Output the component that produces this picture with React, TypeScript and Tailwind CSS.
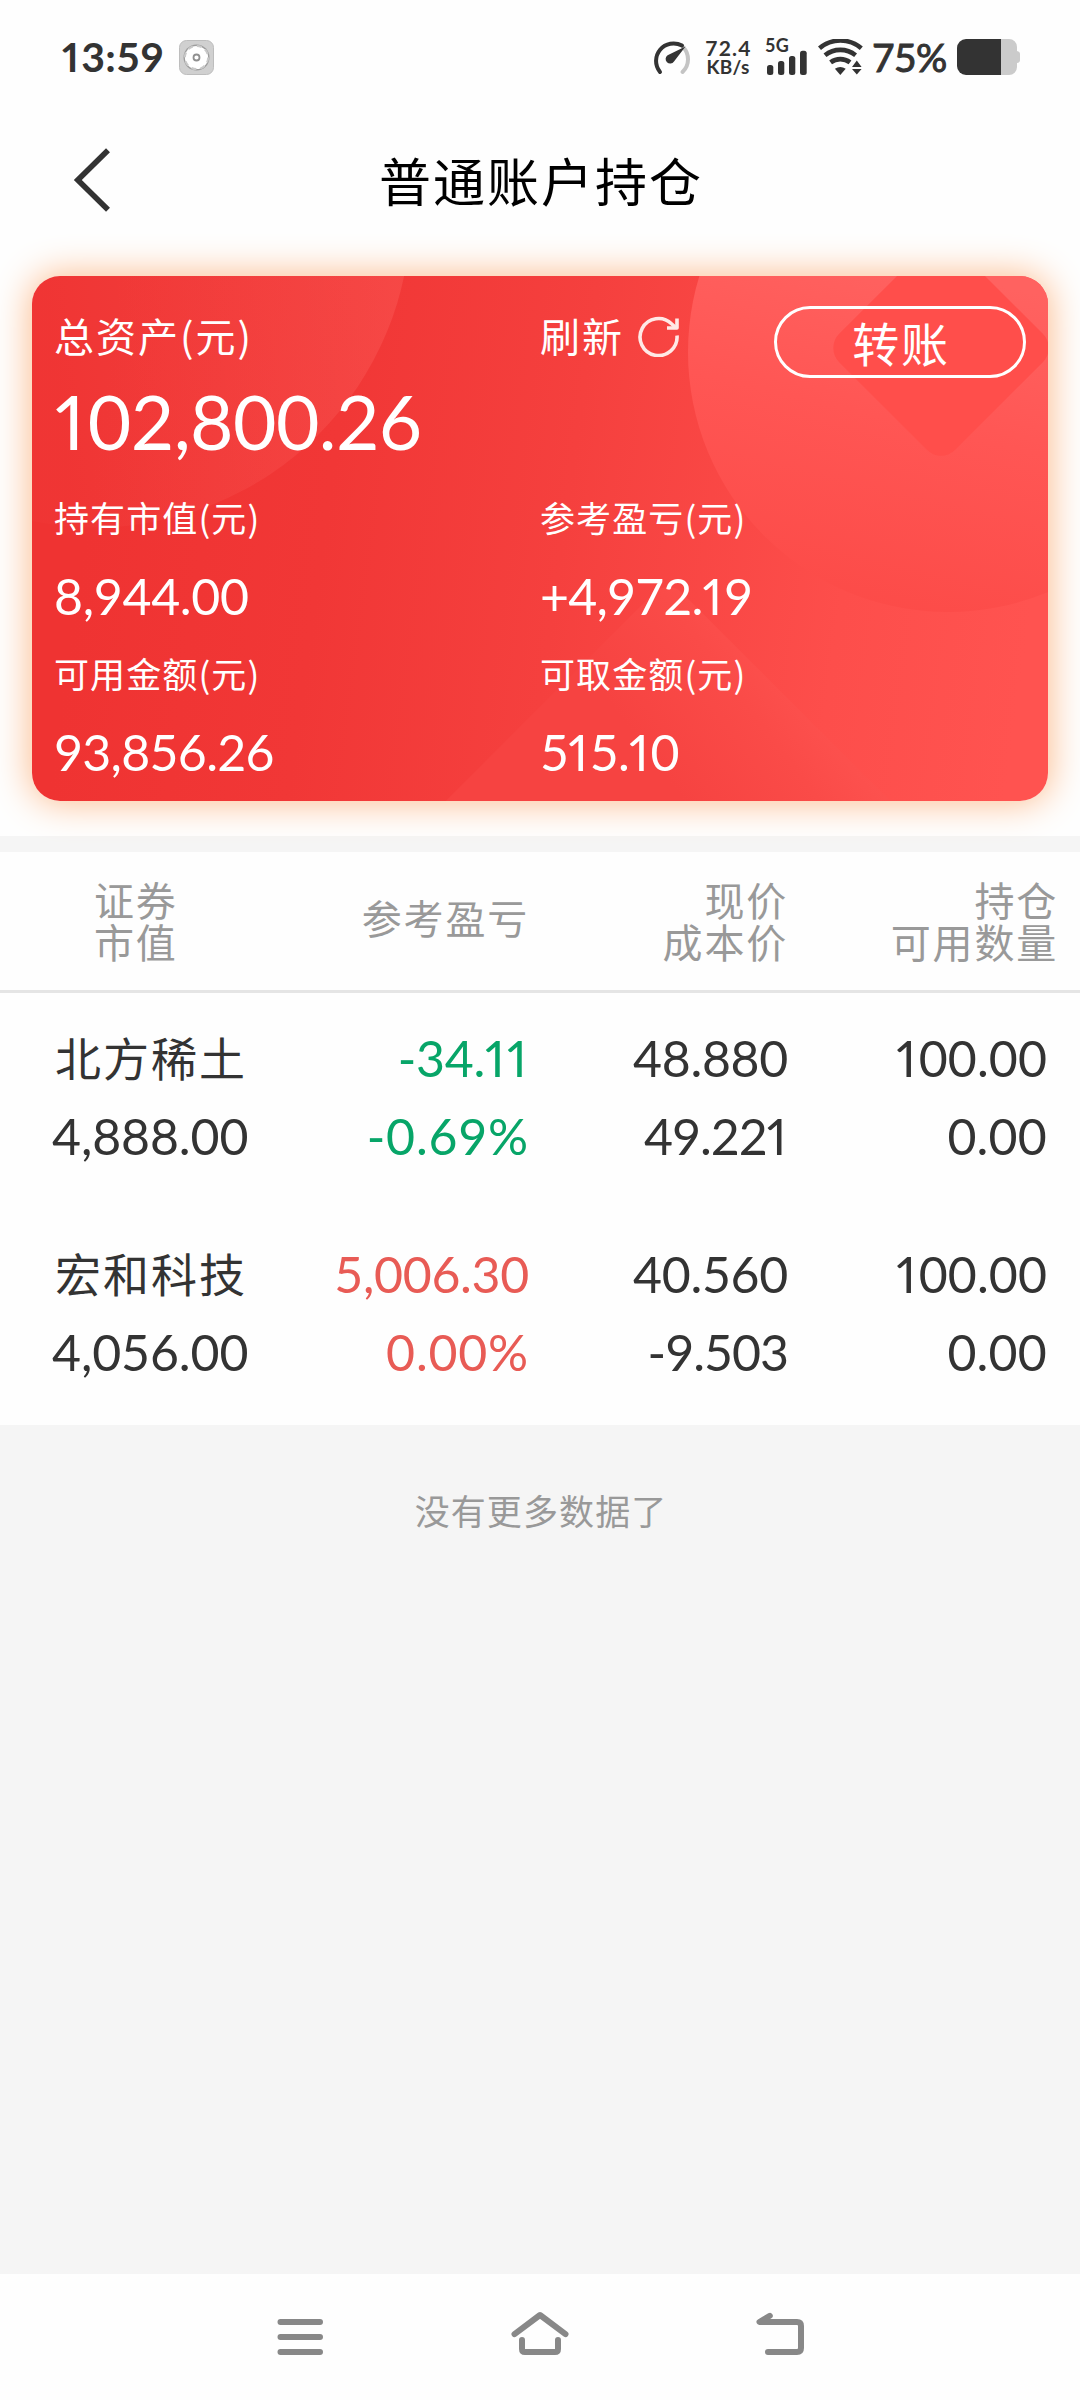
import clsx from "clsx";

const CJK = "font-['Noto_Sans_CJK_SC','Liberation_Sans',sans-serif]";
const LATO = "font-['Lato','Noto_Sans_CJK_SC',sans-serif]";

const holdings = [
  {
    name: "北方稀土",
    value: "4,888.00",
    profit: "-34.11",
    percent: "-0.69%",
    color: "text-[#07a568]",
    price: "48.880",
    cost: "49.221",
    amount: "100.00",
    usable: "0.00",
  },
  {
    name: "宏和科技",
    value: "4,056.00",
    profit: "5,006.30",
    percent: "0.00%",
    color: "text-[#e85b55]",
    price: "40.560",
    cost: "-9.503",
    amount: "100.00",
    usable: "0.00",
  },
];

function Num({ children, className }: { children: string; className?: string }) {
  return (
    <span className={clsx("whitespace-nowrap", LATO, className)}>
      {children.split(/(1)/).map((part, i) =>
        part === "1" ? (
          <span key={i} className="pr-[0.05em] proportional-nums">
            1
          </span>
        ) : (
          part
        ),
      )}
    </span>
  );
}

function StatusBar() {
  return (
    <div className="flex h-[114px] items-center pr-[60px] pl-[62px] text-[#333]">
      <Num className="w-[103px] text-[41px] font-bold tracking-[0.3px]">13:59</Num>
      <svg className="ml-3.5 size-[35px]" viewBox="0 0 35 35">
        <rect x="0.5" y="0.5" width="34" height="34" rx="7" fill="#d0d0d0" stroke="#bdbdbd" />
        <circle cx="17.5" cy="17.5" r="13" fill="#9d9d9d" />
        <circle cx="17.5" cy="17.5" r="11.6" fill="#fff" stroke="#c9c9c9" strokeWidth="2" strokeDasharray="5 4.1" />
        <circle cx="17.5" cy="17.5" r="3" fill="#fff" stroke="#8f8f8f" strokeWidth="1.8" />
      </svg>

      <svg className="ml-auto h-9 w-10" viewBox="0 0 40 36" fill="none" strokeLinecap="round">
        <path d="M31.8 7.8A17.5 17.5 0 0 1 31.5 33" stroke="#c4c4c4" strokeWidth="4" />
        <path d="M9 33A17.5 17.5 0 0 1 31 6.6" stroke="#333" strokeWidth="4" />
        <path d="M34.5 7.5 23 22.6a4.6 4.6 0 1 1-6.4-6.4Z" fill="#333" />
      </svg>
      <div className={clsx("ml-[13px] flex w-[48px] flex-col items-center text-[21px] leading-[19px] font-bold", LATO)}>
        <span className="pl-px tracking-[1.2px]">72.4</span>
        <span className="text-[19px] tracking-[0.3px]">KB/s</span>
      </div>
      <div className="ml-[13px] flex h-9 w-[42px] flex-col">
        <span className={clsx("h-[11px] text-[18px] leading-[13px] font-bold tracking-[0.4px]", LATO)}>5G</span>
        <svg className="h-[25px] w-[42px]" viewBox="0 0 42 25" fill="#333">
          <rect x="2" y="15" width="6.3" height="10" rx="2.5" />
          <rect x="13" y="11" width="6.3" height="14" rx="2.5" />
          <rect x="24" y="6" width="6.3" height="19" rx="2.5" />
          <rect x="35" y="0.7" width="6.7" height="24.3" rx="2.5" />
        </svg>
      </div>
      <svg className="ml-[11px] h-9 w-[46px]" viewBox="0 0 46 36">
        <g fill="none" stroke="#333" strokeWidth="4.6">
          <path d="M1.5 9.3a32 32 0 0 1 41.8 0" />
          <path d="M7 16.2a24.5 24.5 0 0 1 30.6 0" />
          <path d="M12.6 23.4a16 16 0 0 1 19.4 0" />
        </g>
        <path d="M22.3 36l-5.4-6.3q5.4-3.4 10.8 0Z" fill="#333" />
        <path d="M38.8 21.5l4.8 6.6h-9.6ZM38.8 35.5l4.8-5.6h-9.6Z" fill="#333" />
      </svg>
      <span className={clsx("ml-[8px] w-[77px] text-[39px] leading-[40px] tracking-[-0.6px] [-webkit-text-stroke:1px_#333]", LATO)}>
        75%
      </span>
      <svg className="ml-[8px] h-9 w-[63px]" viewBox="0 0 63 36">
        <path d="M44 0h8a8 8 0 0 1 8 8v4q3 .5 3 3v6q0 2.5-3 3v4a8 8 0 0 1-8 8h-8Z" fill="#cbcbcb" />
        <path d="M9 0h35v36H9a9 9 0 0 1-9-9V9a9 9 0 0 1 9-9Z" fill="#333" />
      </svg>
    </div>
  );
}

function TitleBar() {
  return (
    <div className="relative flex h-[136px] items-center justify-center pb-1">
      <svg className="absolute top-[34px] left-[73px] h-16 w-10" viewBox="0 0 40 64" fill="none">
        <path d="M35 2.2 4.800 32l30.200 29.800" stroke="#333" strokeWidth="5.6" />
      </svg>
      <h1 className="pl-0.5 text-[52px] leading-[60px] tracking-[2px] text-black">普通账户持仓</h1>
    </div>
  );
}

function CardBackground() {
  return (
    <svg className="absolute inset-0 size-full" viewBox="0 0 1016 525" preserveAspectRatio="none">
      <defs>
        <linearGradient id="base" gradientUnits="userSpaceOnUse" x1="60" y1="200" x2="1000" y2="330">
          <stop offset="0" stopColor="#ef3332" />
          <stop offset="0.25" stopColor="#f13736" />
          <stop offset="0.5" stopColor="#f5403e" />
          <stop offset="0.8" stopColor="#fd4e4b" />
          <stop offset="1" stopColor="#ff5350" />
        </linearGradient>
        <linearGradient id="leftCircle" gradientUnits="userSpaceOnUse" x1="20" y1="60" x2="360" y2="20">
          <stop offset="0" stopColor="#ff6a66" stopOpacity="0.04" />
          <stop offset="1" stopColor="#ff6a66" stopOpacity="0.3" />
        </linearGradient>
        <linearGradient id="rightCircle" gradientUnits="userSpaceOnUse" x1="930" y1="0" x2="850" y2="336">
          <stop offset="0" stopColor="#ff6260" />
          <stop offset="0.45" stopColor="#ff5654" />
          <stop offset="1" stopColor="#fc4b48" />
        </linearGradient>
        <linearGradient id="bottomDiamond" gradientUnits="userSpaceOnUse" x1="650" y1="310" x2="620" y2="525">
          <stop offset="0" stopColor="#ff5754" />
          <stop offset="0.5" stopColor="#fa4b48" />
          <stop offset="1" stopColor="#f64341" />
        </linearGradient>
      </defs>
      <rect width="1016" height="525" fill="url(#base)" />
      <circle cx="62.8" cy="-64.6" r="316" fill="url(#leftCircle)" />
      <rect x="452" y="379" width="368" height="368" rx="20" transform="rotate(45 636 563)" fill="url(#bottomDiamond)" />
      <circle cx="916" cy="76" r="260" fill="url(#rightCircle)" />
      <rect x="827" y="-10" width="164" height="164" rx="20" transform="rotate(45 909 72)" fill="#ff4e4b" />
    </svg>
  );
}

function AssetCard() {
  return (
    <section className="relative mx-8 mt-[26px] h-[525px] rounded-[28px] text-white shadow-[0_0_36px_2px_#fdbd8f]">
      <div className="absolute inset-0 overflow-hidden rounded-[28px]">
        <CardBackground />
      </div>
      <div className="relative pt-[29px] pl-[22px]">
        <div className="flex h-[60px] items-start text-[40px] leading-[61px] tracking-[2px]">
          <span className="w-[486px]">总资产(元)</span>
          <span>刷新</span>
          <svg className="mt-2.5 ml-[14px] size-[42px]" viewBox="0 0 42 42" fill="none" stroke="#ffe9e6" strokeWidth="3.6">
            <path d="M39 20.5A18.5 18.5 0 1 1 33.5 8.8l4.5 4" />
            <path d="M39 3.5v9.5H29" strokeLinejoin="round" />
          </svg>
          <button className="mt-px mr-[22px] ml-auto h-18 w-[252px] rounded-full border-[3px] border-white pl-0.5 text-[47px] leading-[66px] tracking-[1.8px]">
            转账
          </button>
        </div>
        <div className="h-[112px] pl-px leading-[112px]">
          <Num className="text-[75px] tracking-[-0.6px]">102,800.26</Num>
        </div>
        <div className="grid grid-cols-[486px_1fr] text-[35px] tracking-[1.1px]">
          <span className="leading-[79px]">持有市值(元)</span>
          <span className="leading-[79px]">参考盈亏(元)</span>
          <Num className="text-[50px] leading-[80px] tracking-[-0.3px]">8,944.00</Num>
          <Num className="text-[50px] leading-[80px] tracking-[-0.8px]">+4,972.19</Num>
          <span className="leading-[74px]">可用金额(元)</span>
          <span className="leading-[74px]">可取金额(元)</span>
          <Num className="text-[50px] leading-[85px] tracking-[-0.7px]">93,856.26</Num>
          <Num className="text-[50px] leading-[85px] tracking-[-0.8px]">515.10</Num>
        </div>
      </div>
    </section>
  );
}

function Holdings() {
  return (
    <section className="border-t-[16px] border-[#f5f5f5] bg-[#fefefe]">
      <div className="grid h-[141px] grid-cols-[270px_259px_259px_270px] items-center border-b-[3px] border-[#e5e5e5] pt-1 text-right font-['Liberation_Sans','Noto_Sans_CJK_SC',sans-serif] text-[40px] leading-[42px] tracking-[1.8px] text-[#999]">
        <div className="pl-[94px] text-left">
          证券
          <br />
          市值
        </div>
        <div className="pb-1.5">参考盈亏</div>
        <div>
          现价
          <br />
          成本价
        </div>
        <div>
          持仓
          <br />
          可用数量
        </div>
      </div>
      {holdings.map((item) => (
        <div
          key={item.name}
          className="grid h-[216px] grid-cols-[270px_259px_259px_259px] grid-rows-[78px_78px] pt-[26px] text-right text-[50px] leading-[79px] tracking-[-0.3px] text-[#333]"
        >
          <span className="pl-[55px] text-left text-[46px] leading-[74px] tracking-[2px]">{item.name}</span>
          <Num className={item.color}>{item.profit}</Num>
          <Num>{item.price}</Num>
          <Num className="tracking-[0.1px]">{item.amount}</Num>
          <Num className="pl-[52px] text-left tracking-[-0.1px]">{item.value}</Num>
          <Num className={clsx("tracking-[0.8px]", item.color)}>{item.percent}</Num>
          <Num className="tracking-[-1px]">{item.cost}</Num>
          <Num className="tracking-[0.2px]">{item.usable}</Num>
        </div>
      ))}
    </section>
  );
}

function NavBar() {
  return (
    <nav className="mt-auto h-[126px] bg-[#fefefe]">
      <div className="flex justify-between px-[275px] pt-[35px]">
        <svg className="h-12 w-[50px]" viewBox="0 0 50 48" stroke="#888" strokeWidth="6" strokeLinecap="round">
          <path d="M5.5 13h39.5M5.5 28h39.5M5.5 43h39.5" />
        </svg>
        <svg className="h-12 w-[60px]" viewBox="0 0 60 48" fill="none" stroke="#888" strokeWidth="6" strokeLinecap="round" strokeLinejoin="round">
          <path d="M4.5 25.2 30 6l25.5 19.2" />
          <path d="M12 31v9q0 3 3 3h30q3 0 3-3v-9" />
        </svg>
        <svg className="h-12 w-[50px]" viewBox="0 0 50 48" fill="none" stroke="#888" strokeWidth="6" strokeLinecap="round" strokeLinejoin="round">
          <path d="M14.8 6.8 4.5 13H42q4 0 4 4v22q0 4-4 4H13" />
        </svg>
      </div>
    </nav>
  );
}

export default function App() {
  return (
    <main className={clsx("flex h-[2400px] w-[1080px] flex-col overflow-hidden bg-[#f5f5f5]", CJK)}>
      <div className="bg-[#fefefe] pb-[35px]">
        <StatusBar />
        <TitleBar />
        <AssetCard />
      </div>
      <Holdings />
      <p className="mt-16 pl-0.5 text-center text-[35px] leading-[42px] tracking-[1.1px] text-[#999]">没有更多数据了</p>
      <NavBar />
    </main>
  );
}
